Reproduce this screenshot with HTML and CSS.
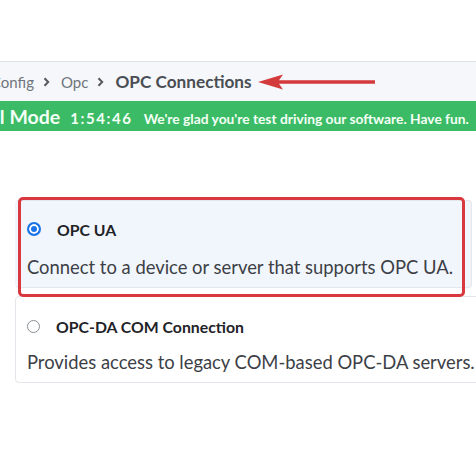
FILE: index.html
```html
<!DOCTYPE html>
<html>
<head>
<meta charset="utf-8">
<link rel="stylesheet" href="styles.css">
</head>
<body>
<div class="page">
  <div class="topspace"></div>
  <div class="crumbs">
    <div class="crumb-track">
      <span class="crumb">Config</span>
      <svg class="sep" width="7" height="10" viewBox="0 0 7 10"><path d="M1.5 1.2 L5.2 5 L1.5 8.8" fill="none" stroke="#555a60" stroke-width="2"/></svg>
      <span class="crumb">Opc</span>
      <svg class="sep" width="7" height="10" viewBox="0 0 7 10"><path d="M1.5 1.2 L5.2 5 L1.5 8.8" fill="none" stroke="#555a60" stroke-width="2"/></svg>
      <span class="crumb current">OPC Connections</span>
    </div>
    <svg class="arrow" width="130" height="20" viewBox="0 0 130 20">
      <path d="M2 10 L27 2.5 L23 8.2 L119 8.2 L119 11.8 L23 11.8 L27 17.5 Z" fill="#d33a3c"/>
    </svg>
  </div>
  <div class="trial">
    <div class="trial-track">
      <span class="mode">Trial Mode</span>
      <span class="timer">1:54:46</span>
      <span class="msg">We're glad you're test driving our software. Have fun.</span>
    </div>
  </div>
  <div class="content">
    <div class="option selected">
      <div class="opt-head">
        <span class="radio checked"></span>
        <span class="opt-title">OPC UA</span>
      </div>
      <div class="opt-desc">Connect to a device or server that supports OPC UA.</div>
      <div class="highlight"></div>
    </div>
    <div class="option second">
      <div class="opt-head">
        <span class="radio"></span>
        <span class="opt-title">OPC-DA COM Connection</span>
      </div>
      <div class="opt-desc">Provides access to legacy COM-based OPC-DA servers.</div>
    </div>
  </div>
</div>
</body>
</html>
```
FILE: styles.css
```css
* { box-sizing: border-box; }
html, body { margin: 0; padding: 0; background: #fff; }
body { width: 476px; height: 476px; overflow: hidden; font-family: "Lato", "Open Sans", sans-serif; }
.page { width: 476px; }
.topspace { height: 61px; }
.crumbs {
  position: relative;
  height: 40px;
  border-top: 1px solid #dfe2e6;
  background: #f5f7fa;
  display: flex;
  align-items: center;
  overflow: hidden;
}
.crumb-track {
  display: flex;
  align-items: center;
  white-space: nowrap;
  margin-left: -9px;
}
.crumb { font-size: 15px; color: #6f757c; }
.crumb.current { font-weight: 700; color: #4a4e54; font-size: 17.2px; }
.sep { flex: none; margin: 1px 11px 0 9px; }
.arrow { position: absolute; left: 256px; top: 10px; }
.trial {
  height: 30px;
  background: #3bbb65;
  display: flex;
  align-items: center;
  overflow: hidden;
  color: #f4fff6;
}
.trial-track {
  display: flex;
  align-items: baseline;
  white-space: nowrap;
  margin-left: -32px;
}
.mode { font-size: 19.5px; font-weight: 700; }
.timer { font-size: 15px; font-weight: 700; letter-spacing: 1.6px; margin-left: 10px; }
.msg { font-size: 13.8px; font-weight: 700; margin-left: 11px; }
.content {
  padding: 69px 0 0 15px;
  display: flex;
  flex-direction: column;
  gap: 8px;
}
.option {
  position: relative;
  border: 1px solid #e3e6ea;
  border-radius: 4px;
  padding: 19px 10px 0 11px;
  background: #fff;
}
.option.selected {
  width: 457px;
  height: 88px;
  background: #f1f6fc;
  border-left-color: transparent;
}
.option.second { width: 470px; height: 87px; padding-top: 20px; }
.opt-head { display: flex; align-items: center; gap: 16px; height: 18px; }
.radio {
  width: 13px; height: 13px; border-radius: 50%;
  border: 1px solid #8a8f95; background: #fff; flex: none;
}
.radio.checked {
  width: 14px; height: 14px;
  border: 2px solid #1a73e8;
  box-shadow: inset 0 0 0 2px #fff;
  background: #1a73e8;
}
.opt-title { font-size: 15.8px; font-weight: 700; color: #1f2327; }
.opt-desc { margin-top: 18px; font-size: 18.4px; line-height: 22px; color: #3c4046; white-space: nowrap; }
.second .opt-desc { margin-top: 16px; }
.highlight {
  position: absolute;
  z-index: 2;
  left: 2px; top: -4px;
  width: 447px; height: 100px;
  border: 3px solid #d9383e;
  border-radius: 5px;
}
```
